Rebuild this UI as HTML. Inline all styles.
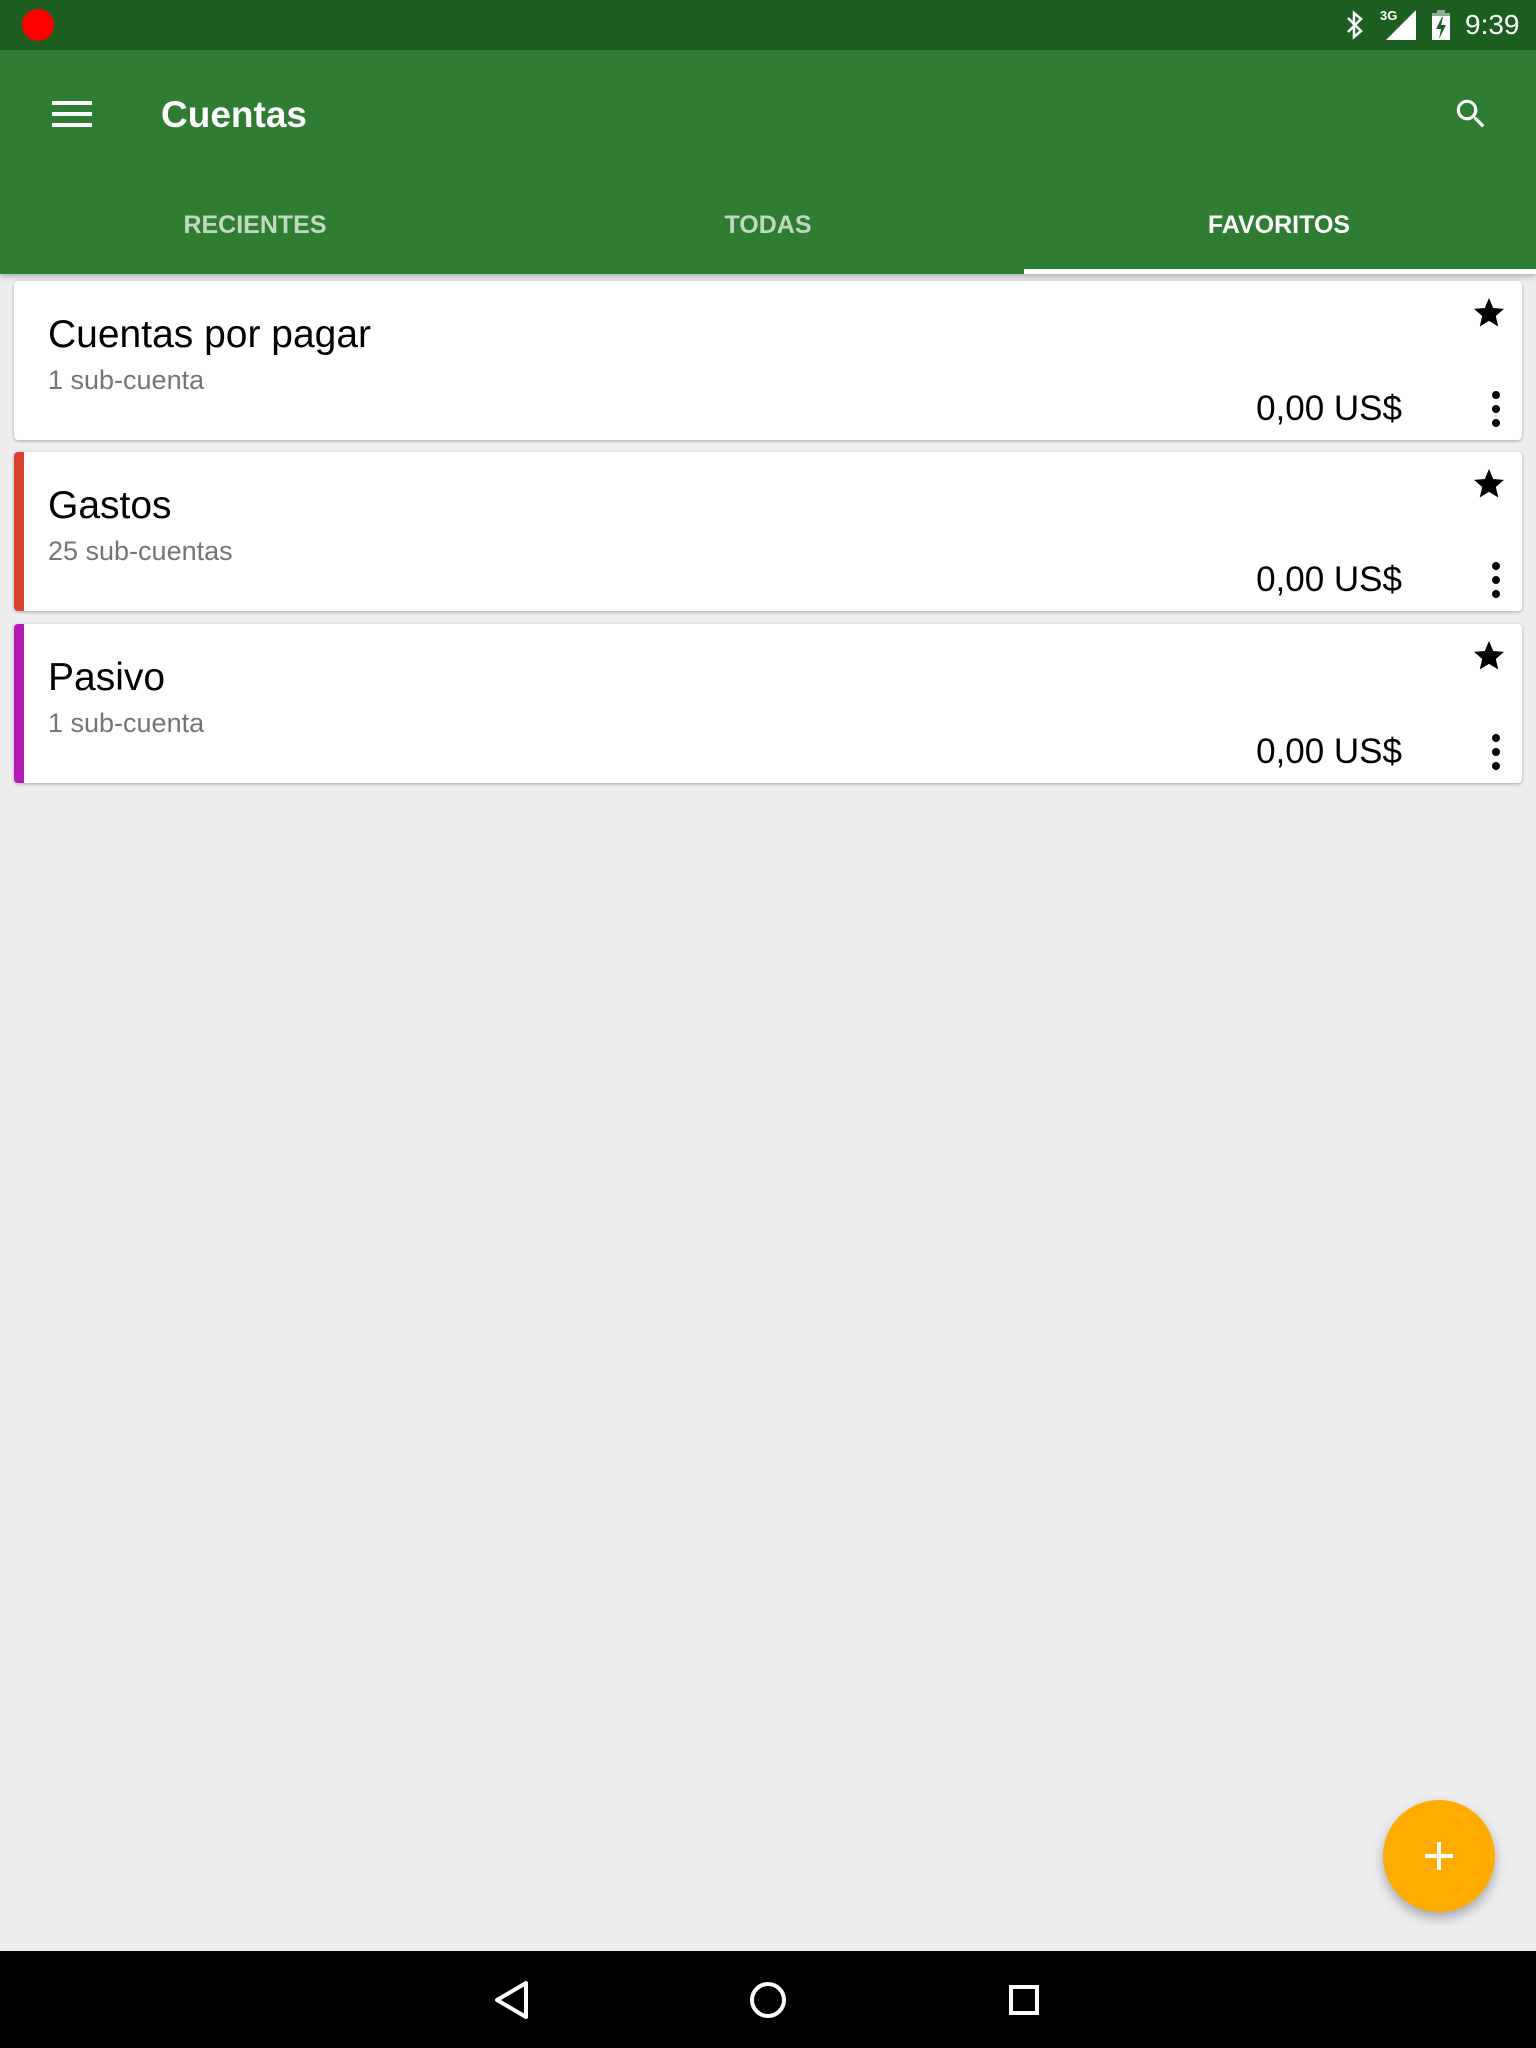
<!DOCTYPE html>
<html><head><meta charset="utf-8"><style>
*{margin:0;padding:0;box-sizing:border-box}
body{width:1536px;height:2048px;background:#eeeeee;font-family:"Liberation Sans",Roboto,sans-serif;position:relative;overflow:hidden}
.status{position:absolute;top:0;left:0;width:1536px;height:50px;background:#1b5e20}
.bar{position:absolute;top:50px;left:0;width:1536px;height:224px;background:#2e7d32;box-shadow:0 3px 5px rgba(0,0,0,.25)}
.title{position:absolute;left:161px;top:94px;color:#fff;font-size:37px;font-weight:bold}
.tab{position:absolute;top:211px;font-size:25px;font-weight:bold;color:rgba(255,255,255,.7);transform:translateX(-50%)}
.ind{position:absolute;left:1024px;top:269px;width:512px;height:5px;background:#fff}
.card{position:absolute;left:14px;width:1508px;height:159px;background:#fff;border-radius:4px;box-shadow:0 1px 3px rgba(0,0,0,.3);overflow:hidden}
.card .l{position:absolute;left:0;top:0;width:10px;height:100%}
.card .n{position:absolute;left:34px;top:32px;font-size:39px;color:#000}
.card .s{position:absolute;left:34px;top:84px;font-size:27px;color:#757575}
.card .a{position:absolute;right:120px;top:108px;font-size:35px;color:#000}
.card svg{position:absolute}
.nav{position:absolute;top:1951px;left:0;width:1536px;height:97px;background:#000}
.fab{position:absolute;left:1383px;top:1800px;width:112px;height:112px;border-radius:50%;background:#ffab00;box-shadow:0 6px 12px rgba(0,0,0,.3)}
</style></head><body>
<div class="status">
<div style="position:absolute;left:22px;top:9px;width:32px;height:32px;border-radius:50%;background:#f00"></div>
<svg style="position:absolute;left:1344px;top:9px" width="22" height="32" viewBox="0 0 22 32"><path d="M4 9 L17 22 L10 28 V4 L17 10 L4 23" stroke="#fff" stroke-width="2.5" fill="none"/></svg>
<div style="position:absolute;left:1380px;top:8px;color:#fff;font-size:13px;font-weight:bold">3G</div>
<svg style="position:absolute;left:1385px;top:10px" width="32" height="30"><polygon points="31,0 31,30 1,30" fill="#fff"/></svg>
<svg style="position:absolute;left:1432px;top:10px" width="18" height="30"><rect x="5" y="0" width="8" height="4" fill="#8fae8f"/><rect x="0" y="3" width="18" height="3" fill="#8fae8f"/><rect x="0" y="6" width="18" height="24" fill="#fff"/><polygon points="10,7 4,19 9,19 7,29 14,15 9,15 11,7" fill="#1b5e20"/></svg>
<div style="position:absolute;left:1465px;top:9px;color:#fff;font-size:28px">9:39</div>
</div>
<div class="bar">
<svg style="position:absolute;left:52px;top:49px" width="40" height="30"><rect y="2" width="40" height="4" fill="#fff"/><rect y="13" width="40" height="4" fill="#fff"/><rect y="24" width="40" height="4" fill="#fff"/></svg>
<svg style="position:absolute;left:1452px;top:45px" width="38" height="38" viewBox="0 0 24 24"><path fill="#fff" d="M15.5 14h-.79l-.28-.27A6.470 6.470 0 0 0 16 9.5 6.5 6.5 0 1 0 9.5 16c1.61 0 3.09-.59 4.23-1.570l.27.28v.79l5 4.990L20.49 19l-4.990-5zm-6 0C7.01 14 5 11.99 5 9.5S7.01 5 9.5 5 14 7.01 14 9.5 11.99 14 9.5 14z"/></svg>
</div>
<div class="title">Cuentas</div>
<div class="tab" style="left:255px">RECIENTES</div>
<div class="tab" style="left:768px">TODAS</div>
<div class="tab" style="left:1279px;color:#fff">FAVORITOS</div>
<div class="ind"></div>

<div class="card" style="top:281px">
<div class="n">Cuentas por pagar</div><div class="s">1 sub-cuenta</div><div class="a">0,00 US$</div>
<svg style="left:1457px;top:14px" width="36" height="36" viewBox="0 0 24 24"><path d="M12 17.27L18.18 21l-1.64-7.03L22 9.24l-7.19-.61L12 2 9.19 8.63 2 9.24l5.46 4.73L5.82 21z"/></svg>
<svg style="left:1477px;top:110px" width="10" height="36"><circle cx="5" cy="4" r="4"/><circle cx="5" cy="18" r="4"/><circle cx="5" cy="32" r="4"/></svg>
</div>
<div class="card" style="top:452px">
<div class="l" style="background:#d84030"></div>
<div class="n">Gastos</div><div class="s">25 sub-cuentas</div><div class="a">0,00 US$</div>
<svg style="left:1457px;top:14px" width="36" height="36" viewBox="0 0 24 24"><path d="M12 17.27L18.18 21l-1.64-7.03L22 9.24l-7.19-.61L12 2 9.19 8.63 2 9.24l5.46 4.73L5.82 21z"/></svg>
<svg style="left:1477px;top:110px" width="10" height="36"><circle cx="5" cy="4" r="4"/><circle cx="5" cy="18" r="4"/><circle cx="5" cy="32" r="4"/></svg>
</div>
<div class="card" style="top:624px">
<div class="l" style="background:#b41ab4"></div>
<div class="n">Pasivo</div><div class="s">1 sub-cuenta</div><div class="a">0,00 US$</div>
<svg style="left:1457px;top:14px" width="36" height="36" viewBox="0 0 24 24"><path d="M12 17.27L18.18 21l-1.64-7.03L22 9.24l-7.19-.61L12 2 9.19 8.63 2 9.24l5.46 4.73L5.82 21z"/></svg>
<svg style="left:1477px;top:110px" width="10" height="36"><circle cx="5" cy="4" r="4"/><circle cx="5" cy="18" r="4"/><circle cx="5" cy="32" r="4"/></svg>
</div>

<div class="fab"><svg width="112" height="112"><rect x="42" y="54" width="28" height="4" fill="#fff"/><rect x="54" y="42" width="4" height="28" fill="#fff"/></svg></div>

<div class="nav">
<svg style="position:absolute;left:492px;top:28px" width="40" height="42"><polygon points="34,4 34,38 5,21" fill="none" stroke="#fff" stroke-width="4" stroke-linejoin="round"/></svg>
<svg style="position:absolute;left:748px;top:29px" width="40" height="40"><circle cx="20" cy="20" r="16" fill="none" stroke="#fff" stroke-width="4"/></svg>
<svg style="position:absolute;left:1008px;top:33px" width="32" height="32"><rect x="3" y="3" width="26" height="26" fill="none" stroke="#fff" stroke-width="4"/></svg>
</div>
</body></html>
